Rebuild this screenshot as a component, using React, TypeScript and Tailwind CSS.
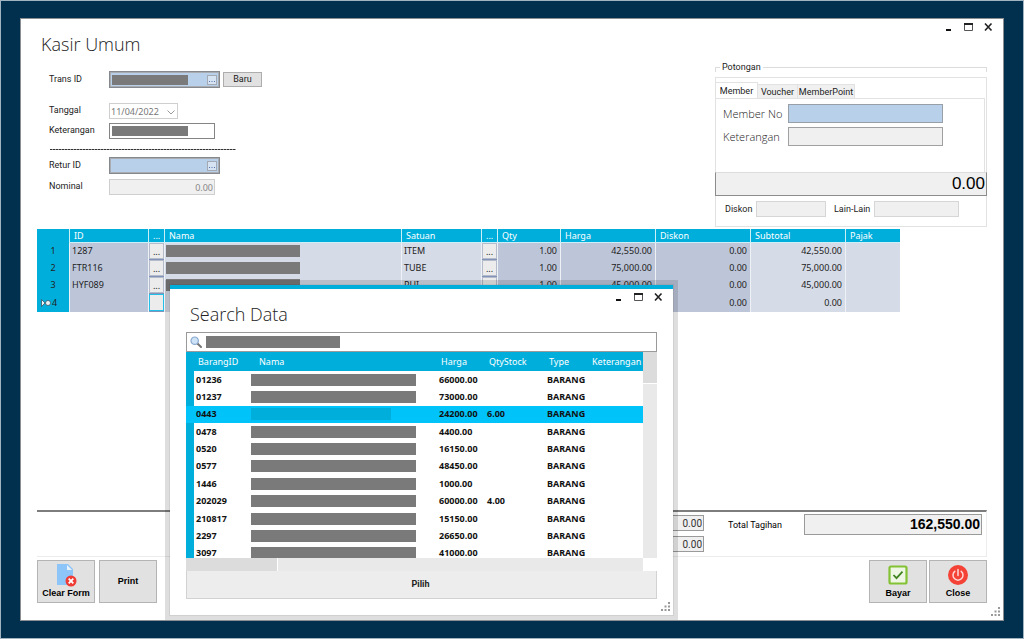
import type { ReactNode } from "react";

type CartRow = { id: string; unit: string; qty: string; price: string; discount: string; subtotal: string };
type StockRow = { id: string; price: string; stock?: string };

const cart: CartRow[] = [
  { id: "1287", unit: "ITEM", qty: "1.00", price: "42,550.00", discount: "0.00", subtotal: "42,550.00" },
  { id: "FTR116", unit: "TUBE", qty: "1.00", price: "75,000.00", discount: "0.00", subtotal: "75,000.00" },
  { id: "HYF089", unit: "PUI", qty: "1.00", price: "45,000.00", discount: "0.00", subtotal: "45,000.00" },
  { id: "", unit: "", qty: "", price: "", discount: "0.00", subtotal: "0.00" },
];

const stock: StockRow[] = [
  { id: "01236", price: "66000.00" },
  { id: "01237", price: "73000.00" },
  { id: "0443", price: "24200.00", stock: "6.00" },
  { id: "0478", price: "4400.00" },
  { id: "0520", price: "16150.00" },
  { id: "0577", price: "48450.00" },
  { id: "1446", price: "1000.00" },
  { id: "202029", price: "60000.00", stock: "4.00" },
  { id: "210817", price: "15150.00" },
  { id: "2297", price: "26650.00" },
  { id: "3097", price: "41000.00" },
];

const SELECTED_ID = "0443";

const WindowButtons = () => (
  <div className="flex items-center gap-2">
    <button aria-label="Minimize" className="flex h-3 w-3 items-center justify-center">
      <svg viewBox="0 0 12 12" className="h-3 w-3"><path d="M4 9h5" stroke="#111" strokeWidth="2" /></svg>
    </button>
    <button aria-label="Maximize" className="flex h-3 w-3 items-center justify-center">
      <svg viewBox="0 0 12 12" className="h-3 w-3">
        <path d="M2.5 3v6.5h8V3" fill="none" stroke="#555" />
        <path d="M2 3h9" stroke="#222" strokeWidth="2" />
      </svg>
    </button>
    <button aria-label="Close window" className="flex h-3 w-3 items-center justify-center">
      <svg viewBox="0 0 12 12" className="h-3 w-3">
        <path d="M3 2.500l6.500 7M9.500 2.500l-6.500 7" stroke="#222" strokeWidth="1.600" />
      </svg>
    </button>
  </div>
);

const Grip = () => (
  <svg viewBox="0 0 9 9" className="absolute right-[3px] bottom-1 h-[9px] w-[9px]" fill="#999">
    <path d="M7 0h2v2H7zM7 3.500h2v2H7zM3.500 3.500h2v2h-2zM7 7h2v2H7zM3.500 7h2v2h-2zM0 7h2v2H0z" />
  </svg>
);

const LookupField = ({ id, filled }: { id: string; filled?: boolean }) => (
  <div className="flex h-[17px] w-[111px] items-center border-2 border-[#a9adb2] bg-[#b8d0ea] outline-1 -outline-offset-1 outline-[#85898d]">
    {filled && <span className="ml-px h-[10px] w-[76px] shrink-0 bg-[#7a7a7a]" />}
    <input id={id} className="h-full min-w-0 flex-1 bg-transparent outline-none" />
    <button aria-label="Lookup" className="mr-px flex h-[10px] w-[10px] shrink-0 items-end justify-center border border-[#a3aab3] bg-[#d5e3f2]">
      <svg viewBox="0 0 8 8" className="h-2 w-2" fill="#5674a8"><path d="M1 5h1v1H1zM3.500 5h1v1h-1zM6 5h1v1H6z" /></svg>
    </button>
  </div>
);

const FormRow = ({ label, htmlFor, className, children }: { label: string; htmlFor: string; className?: string; children: ReactNode }) => (
  <div className={`flex items-center ${className ?? ""}`}>
    <label htmlFor={htmlFor} className="w-[60px] shrink-0 pb-0.5">{label}</label>
    {children}
  </div>
);

const TransactionForm = () => (
  <form className="pt-[9px] pl-3 text-[9px] leading-3 text-[#222]">
    <FormRow label="Trans ID" htmlFor="trans" className="mb-[15px]">
      <LookupField id="trans" filled />
      <button type="button" className="ml-[3px] h-[15px] w-[39px] border border-[#adadad] bg-[#e1e1e1] leading-none">Baru</button>
    </FormRow>
    <FormRow label="Tanggal" htmlFor="tanggal" className="mb-1">
      <div className="relative">
        <select id="tanggal" disabled className="block h-4 w-[69px] appearance-none border border-[#cfcfcf] bg-white pl-px font-['Noto_Sans',sans-serif] text-[9px] leading-none text-[#777] opacity-100">
          <option>11/04/2022</option>
        </select>
        <svg viewBox="0 0 8 5" className="pointer-events-none absolute top-[7px] right-[3px] h-[5px] w-2">
          <path d="M.5.5L4 4 7.500.5" fill="none" stroke="#999" />
        </svg>
      </div>
    </FormRow>
    <FormRow label="Keterangan" htmlFor="ket">
      <div className="flex h-4 w-[106px] items-center border border-[#858585] bg-white pl-0.5">
        <span className="h-[10px] w-[76px] shrink-0 bg-[#7a7a7a]" />
        <input id="ket" className="h-full min-w-0 flex-1 outline-none" />
      </div>
    </FormRow>
    <div className="mt-[10px] mb-[7px] ml-px h-px w-[186px] bg-[repeating-linear-gradient(90deg,#333_0_2px,#999_2px_3px)]" />
    <FormRow label="Retur ID" htmlFor="retur" className="mb-[5px]">
      <LookupField id="retur" />
    </FormRow>
    <FormRow label="Nominal" htmlFor="nominal">
      <input id="nominal" readOnly defaultValue="0.00" className="h-4 w-[106px] border border-[#cfcfcf] bg-[#f0f0f0] px-px text-right font-['Noto_Sans',sans-serif] text-[#888]" />
    </FormRow>
  </form>
);

const DiscountPanel = () => (
  <section className="w-[272px] text-[9px] leading-3 text-[#222]">
    <div className="flex h-[10px] items-center">
      <span className="mt-1 h-[5px] w-[5px] border-t border-l border-[#dcdcdc]" />
      <h2 className="px-0.5">Potongan</h2>
      <span className="mt-1 h-[5px] flex-1 border-t border-r border-[#dcdcdc]" />
    </div>
    <div className="mt-[5px] border border-[#e2e2e2]">
      <div role="tablist" className="flex items-end pt-1 whitespace-nowrap">
        <button role="tab" aria-selected="true" className="h-4 w-[42px] border-t border-r border-[#e2e2e2]">Member</button>
        <button role="tab" aria-selected="false" className="h-[14px] w-10 border-t border-r border-[#e2e2e2] bg-[#f0f0f0]">Voucher</button>
        <button role="tab" aria-selected="false" className="h-[14px] w-[57px] border-t border-r border-[#e2e2e2] bg-[#f0f0f0]">MemberPoint</button>
      </div>
      <div className="mr-px flex h-[74px] flex-col gap-1 border-t border-r border-[#e2e2e2] pt-[5px] pl-[7px] font-['Open_Sans',sans-serif] text-[11px] font-light">
        <div className="flex items-center">
          <label htmlFor="member" className="w-[65px]">Member No</label>
          <input id="member" className="h-[19px] w-[155px] border border-[#999fa6] bg-[#b8d0ea]" />
        </div>
        <div className="flex items-center">
          <label htmlFor="member-ket" className="w-[65px]">Keterangan</label>
          <input id="member-ket" readOnly className="h-[19px] w-[155px] border border-[#a0a0a0] bg-[#f0f0f0]" />
        </div>
      </div>
      <output className="-mx-px flex h-6 items-center justify-end border border-[#8c8c8c] border-t-[#dcdcdc] bg-[#f0f0f0] px-px font-['Liberation_Sans',Arial,sans-serif] text-[17px] text-black">0.00</output>
      <div className="flex h-[30px] items-center pb-1 pl-[9px] whitespace-nowrap">
        <label htmlFor="diskon" className="w-[31px]">Diskon</label>
        <input id="diskon" readOnly className="h-4 w-[70px] border border-[#d6d6d6] bg-[#f0f0f0]" />
        <label htmlFor="lain" className="mr-[5px] ml-2 w-[35px]">Lain-Lain</label>
        <input id="lain" readOnly className="h-4 w-[85px] border border-[#d6d6d6] bg-[#f0f0f0]" />
      </div>
    </div>
  </section>
);

const DotsCell = ({ empty }: { empty?: boolean }) => (
  <td className="bg-[#8193b8] p-0">
    <button
      aria-label="Browse"
      className={`flex w-full items-center justify-center border bg-[#ececec] leading-none ${empty ? "h-[17px] border-[#22bfe8]" : "h-4 border-[#b4bccb]"}`}
    >
      {empty ? "" : "..."}
    </button>
  </td>
);

const CartTable = () => (
  <table className="h-[83px] w-[863px] table-fixed border-separate border-spacing-0 font-['Noto_Sans',sans-serif] text-[9px] leading-3 text-[#222]">
    <colgroup>
      <col className="w-8" />
      <col className="w-[79px]" />
      <col className="w-4" />
      <col className="w-[237px]" />
      <col className="w-[80px]" />
      <col className="w-4" />
      <col className="w-[63px]" />
      <col className="w-[95px]" />
      <col className="w-[95px]" />
      <col className="w-[95px]" />
      <col className="w-[55px]" />
    </colgroup>
    <thead>
      <tr className="h-[14px] bg-[#00aedb] text-left text-white [&>th]:border-b [&>th]:border-l [&>th]:border-white/80 [&>th]:p-0 [&>th]:pl-1 [&>th]:font-normal [&>th:first-child]:border-0">
        <th aria-label="Row" />
        <th>ID</th>
        <th>...</th>
        <th>Nama</th>
        <th>Satuan</th>
        <th>...</th>
        <th>Qty</th>
        <th>Harga</th>
        <th>Diskon</th>
        <th>Subtotal</th>
        <th>Pajak</th>
      </tr>
    </thead>
    <tbody className="[&_td]:border-l [&_td]:border-[#eef1f6]">
      {cart.map((row, i) => (
        <tr key={i}>
          <th scope="row" className="bg-[#00aedb] p-0 font-normal">
            <span className="flex items-center justify-center">
              {!row.id && (
                <svg viewBox="0 0 10 8" className="h-2 w-[10px]" fill="#e8f4f8" stroke="#345" strokeWidth=".7">
                  <path d="M.5.5L4 4 .5 7.500z" />
                  <circle cx="7" cy="4" r="2.500" />
                </svg>
              )}
              <span className={row.id ? "" : "pl-px pr-2"}>{i + 1}</span>
            </span>
          </th>
          <td className="bg-[#bdc6d9] p-0 pl-0.5">{row.id}</td>
          <DotsCell empty={!row.id} />
          <td className="bg-[#d5dbe7] p-0 pl-px">
            {row.id && <span className="block h-3 w-[134px] bg-[#7a7a7a]" />}
          </td>
          <td className="bg-[#d5dbe7] p-0 pl-0.5">{row.unit}</td>
          <DotsCell empty={!row.id} />
          <td className="bg-[#bdc6d9] p-0 pr-[3px] text-right">{row.qty}</td>
          <td className="bg-[#bdc6d9] p-0 pr-[3px] text-right">{row.price}</td>
          <td className="bg-[#bdc6d9] p-0 pr-[3px] text-right">{row.discount}</td>
          <td className="bg-[#d5dbe7] p-0 pr-[3px] text-right">{row.subtotal}</td>
          <td className="bg-[#d5dbe7] p-0" />
        </tr>
      ))}
    </tbody>
  </table>
);

const SearchDialog = () => (
  <div
    role="dialog"
    aria-label="Search Data"
    className="absolute top-[266px] left-[149px] w-[503px] border-t-4 border-[#00aedb] bg-white px-4 pb-4 shadow-[0_0_0_1px_rgba(0,0,0,0.06),0_0_0_5px_rgba(0,0,0,0.13)]"
  >
    <div className="flex h-[43px] justify-between">
      <h2 className="pt-[13px] pl-1 font-['Open_Sans',sans-serif] text-[18px] leading-6 font-light text-[#222]">Search Data</h2>
      <div className="-mr-[7px] h-3 pt-0.5"><WindowButtons /></div>
    </div>
    <div className="flex h-5 items-center border border-[#9a9a9a] bg-white pl-[3px]">
      <svg viewBox="0 0 12 12" className="mr-1 h-3 w-3 shrink-0">
        <path d="M7.500 7.500l3.500 3.500" stroke="#777" strokeWidth="2" strokeLinecap="round" />
        <circle cx="4.700" cy="4.700" r="3.700" fill="#cfe3f7" stroke="#8ba9d0" strokeWidth="1.200" />
      </svg>
      <span className="h-3 w-[134px] shrink-0 bg-[#7a7a7a]" />
      <input aria-label="Search" className="h-full min-w-0 flex-1 outline-none" />
    </div>
    <div className="flex">
      <div className="h-[206px] flex-1 overflow-hidden">
        <table className="h-[210px] w-full table-fixed border-collapse font-['Noto_Sans',sans-serif] text-[9px] leading-3 text-[#111]">
          <colgroup>
            <col className="w-2" />
            <col className="w-[57px]" />
            <col className="w-[186px]" />
            <col className="w-[49px]" />
            <col className="w-[59px]" />
            <col className="w-[43px]" />
            <col />
          </colgroup>
          <thead>
            <tr className="h-[19px] bg-[#00aedb] text-left text-white [&>th]:p-0 [&>th]:font-normal">
              <th aria-label="Row" />
              <th className="pl-1!">BarangID</th>
              <th className="pl-2!">Nama</th>
              <th className="pl-1!">Harga</th>
              <th className="pl-[3px]!">QtyStock</th>
              <th className="pl-1!">Type</th>
              <th className="pl-1!">Keterangan</th>
            </tr>
          </thead>
          <tbody className="font-bold [&_td]:p-0">
            {stock.map((item) => {
              const selected = item.id === SELECTED_ID;
              return (
                <tr key={item.id} className={selected ? "bg-[#00c4f9]" : ""}>
                  <td className={selected ? "" : "bg-[#00aedb]"} />
                  <td className="pl-0.5!">{item.id}</td>
                  <td>
                    <span className={`block h-3 ${selected ? "w-[140px] bg-[#00aedb]" : "w-[165px] bg-[#7a7a7a]"}`} />
                  </td>
                  <td className="pl-0.5!">{item.price}</td>
                  <td className="pl-px!">{item.stock}</td>
                  <td className="pl-0.5!">BARANG</td>
                  <td />
                </tr>
              );
            })}
          </tbody>
        </table>
      </div>
      <div className="w-[14px] bg-[#e9e9e9]">
        <div className="h-8 border-b border-white bg-[#dcdcdc]" />
      </div>
    </div>
    <div className="mr-[14px] h-[13px] bg-[#e9e9e9]">
      <div className="h-full w-[92px] border-r border-white bg-[#dcdcdc]" />
    </div>
    <button className="block h-7 w-full border border-t-0 border-[#d2d2d2] bg-[#ededed] pr-0.5 text-[9px] leading-none font-bold text-[#222]">Pilih</button>
    <Grip />
  </div>
);

const TotalsPanel = () => (
  <section className="flex h-[47px] border-t-2 border-r border-b border-[#ececec] border-t-[#7d7d7d] pr-1 text-[9px]">
    <div className="ml-auto flex flex-col gap-[5px] pt-[3px]">
      <input aria-label="Diskon total" readOnly defaultValue="0.00" className="h-4 w-[85px] border border-[#9a9a9a] bg-[#f0f0f0] px-px text-right text-[10px] text-[#333]" />
      <input aria-label="Pajak total" readOnly defaultValue="0.00" className="h-4 w-[85px] border border-[#9a9a9a] bg-[#f0f0f0] px-px text-right text-[10px] text-[#333]" />
    </div>
    <label htmlFor="total" className="mt-[7px] ml-6 w-[76px] leading-3">Total Tagihan</label>
    <input
      id="total"
      readOnly
      defaultValue="162,550.00"
      className="mt-0.5 h-[21px] w-[178px] border border-[#9a9a9a] bg-[#f0f0f0] px-px text-right font-['Liberation_Sans',Arial,sans-serif] text-[14px] font-bold text-black"
    />
  </section>
);

const ActionButton = ({ label, children }: { label: string; children?: ReactNode }) => (
  <button className="flex h-[43px] w-[58px] flex-col items-center justify-center border border-[#b4b4b4] bg-[#e1e1e1] pb-0.5 font-['Liberation_Sans',Arial,sans-serif] text-[9px] leading-3 font-bold whitespace-nowrap text-black">
    {children && <span className="flex h-6 items-center">{children}</span>}
    {label}
  </button>
);

const App = () => (
  <div className="flex min-h-screen flex-col border border-[#9fb4c0] bg-[#00304d] px-[19px] py-[17px] font-['Roboto',sans-serif]">
    <main className="relative flex flex-1 flex-col border border-[#8b8f92] bg-white px-4 pb-[17px]">
      <header className="flex h-[43px] justify-between">
        <h1 className="pt-[13px] pl-1 font-['Open_Sans',sans-serif] text-[18px] leading-6 font-light text-[#222]">Kasir Umum</h1>
        <div className="-mr-[7px] h-3 pt-0.5"><WindowButtons /></div>
      </header>
      <div className="flex items-start justify-between">
        <TransactionForm />
        <DiscountPanel />
      </div>
      <div className="mt-0.5">
        <CartTable />
      </div>
      <div className="mt-auto">
        <TotalsPanel />
        <div className="mt-[3px] flex items-center gap-1">
          <ActionButton label="Clear Form">
            <svg viewBox="0 0 24 24" className="h-6 w-6">
              <path d="M3 1h11l5 5v16H3z" fill="#8ec5f8" />
              <path d="M13 2l5 5h-5z" fill="#e8f3fd" />
              <circle cx="17" cy="18" r="5.500" fill="#ef3b33" />
              <path d="M14.700 15.700l4.600 4.600M19.300 15.700l-4.600 4.600" stroke="#fff" strokeWidth="1.800" />
            </svg>
          </ActionButton>
          <ActionButton label="Print" />
          <div className="ml-auto flex gap-0.5">
            <ActionButton label="Bayar">
              <svg viewBox="0 0 20 20" className="h-5 w-5">
                <rect x="1.500" y="1.500" width="17" height="17" rx="1.500" fill="#eef7e4" stroke="#84c235" strokeWidth="2.200" />
                <path d="M5.500 10l3 3.200 6-6.500" fill="none" stroke="#3f8420" strokeWidth="1.800" />
              </svg>
            </ActionButton>
            <ActionButton label="Close">
              <svg viewBox="0 0 20 20" className="h-5 w-5">
                <circle cx="10" cy="10" r="10" fill="#f44336" />
                <path d="M6.800 6.300a5 5 0 1 0 6.400 0M10 4.500v6" fill="none" stroke="#ffd9d6" strokeWidth="1.500" strokeLinecap="round" />
              </svg>
            </ActionButton>
          </div>
        </div>
      </div>
      <SearchDialog />
      <Grip />
    </main>
  </div>
);

export default App;
